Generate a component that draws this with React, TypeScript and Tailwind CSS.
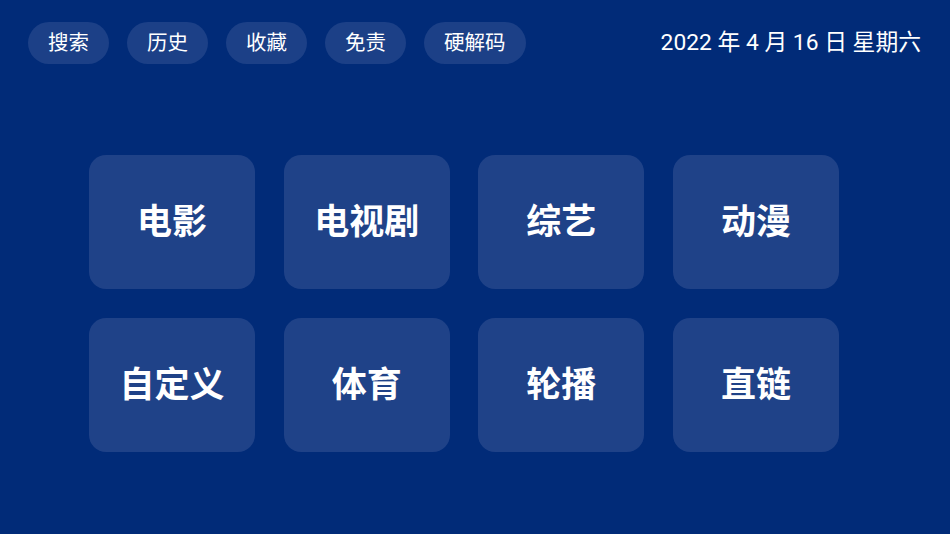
const tabs = ['搜索', '历史', '收藏', '免责', '硬解码']
const cards = ['电影', '电视剧', '综艺', '动漫', '自定义', '体育', '轮播', '直链']

export default function App() {
    return (
        <div
            className="w-[950px] h-[534px] bg-[#012b78] text-white overflow-hidden"
            style={{ fontFamily: 'Roboto, "Noto Sans CJK SC", sans-serif' }}
        >
            <div className="flex items-center justify-between pl-[28px] pr-[29px] pt-[22px]">
                <div className="flex gap-[18px]">
                    {tabs.map((t) => (
                        <div
                            key={t}
                            className="h-[42px] px-[20px] rounded-full bg-[#1c4087] flex items-center text-[20.5px] leading-none"
                        >
                            {t}
                        </div>
                    ))}
                </div>
                <div className="text-[22.8px] leading-none">2022 年 4 月 16 日 星期六</div>
            </div>

            <div className="grid grid-cols-[repeat(4,166px)] gap-x-[28.7px] gap-y-[29px] pl-[89px] mt-[91px]">
                {cards.map((c) => (
                    <div
                        key={c}
                        className="h-[134px] pt-[3px] rounded-[17px] bg-[#1f4288] flex items-center justify-center text-[35px] font-bold"
                    >
                        {c}
                    </div>
                ))}
            </div>
        </div>
    )
}
